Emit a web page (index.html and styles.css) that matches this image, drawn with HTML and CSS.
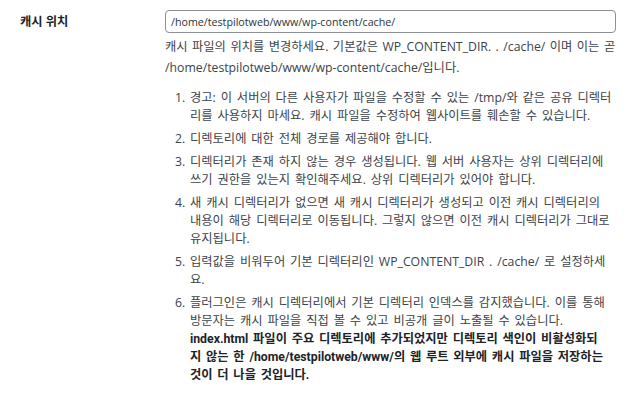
FILE: index.html
```html
<!DOCTYPE html>
<html lang="ko">
<head>
<meta charset="utf-8">
<title>캐시 위치</title>
<link rel="stylesheet" href="styles.css">
</head>
<body>
<div class="row">
  <div class="label">캐시 위치</div>
  <div class="field">
    <input class="path" type="text" value="/home/testpilotweb/www/wp-content/cache/">
    <p class="description">캐시 파일의 위치를 변경하세요. 기본값은 WP_CONTENT_DIR. . /cache/ 이며 이는 곧<br>/home/testpilotweb/www/wp-content/cache/입니다.</p>
    <ol class="notes">
      <li>경고: 이 서버의 다른 사용자가 파일을 수정할 수 있는 /tmp/와 같은 공유 디렉터<br>리를 사용하지 마세요. 캐시 파일을 수정하여 웹사이트를 훼손할 수 있습니다.</li>
      <li>디렉토리에 대한 전체 경로를 제공해야 합니다.</li>
      <li>디렉터리가 존재 하지 않는 경우 생성됩니다. 웹 서버 사용자는 상위 디렉터리에<br>쓰기 권한을 있는지 확인해주세요. 상위 디렉터리가 있어야 합니다.</li>
      <li>새 캐시 디렉터리가 없으면 새 캐시 디렉터리가 생성되고 이전 캐시 디렉터리의<br>내용이 해당 디렉터리로 이동됩니다. 그렇지 않으면 이전 캐시 디렉터리가 그대로<br>유지됩니다.</li>
      <li>입력값을 비워두어 기본 디렉터리인 WP_CONTENT_DIR . /cache/ 로 설정하세<br>요.</li>
      <li>플러그인은 캐시 디렉터리에서 기본 디렉터리 인덱스를 감지했습니다. 이를 통해<br>방문자는 캐시 파일을 직접 볼 수 있고 비공개 글이 노출될 수 있습니다.<br><strong>index.html 파일이 주요 디렉토리에 추가되었지만 디렉토리 색인이 비활성화되<br>지 않는 한 /home/testpilotweb/www/의 웹 루트 외부에 캐시 파일을 저장하는<br>것이 더 나을 것입니다.</strong></li>
    </ol>
  </div>
</div>
</body>
</html>
```
FILE: styles.css
```css
html, body {
  margin: 0;
  padding: 0;
  background: #ffffff;
}
body {
  font-family: "Open Sans", "Noto Sans CJK KR", sans-serif;
  color: #3c434a;
}
.row {
  display: flex;
  padding: 10px 0 0 20px;
}
.label {
  width: 145px;
  flex: none;
  font-size: 12.25px;
  font-weight: bold;
  color: #1d2327;
  line-height: 24px;
}
.field {
  display: flex;
  flex-direction: column;
  white-space: nowrap;
}
.path {
  box-sizing: border-box;
  width: 451px;
  height: 23px;
  margin: 0;
  padding: 0 5px;
  border: 1px solid #8c8f94;
  border-radius: 4px;
  font-family: inherit;
  font-size: 10.7px;
  color: #2c3338;
  background: #fff;
}
.description,
.notes {
  font-size: 12.27px;
}
.description {
  margin: 3px 0 0;
  line-height: 21px;
  word-spacing: 1.3px;
}
.notes {
  margin: 11px 0 0;
  padding-left: 25px;
  line-height: 18.2px;
  word-spacing: 1.7px;
}
.notes li {
  margin-bottom: 4.5px;
}
.notes strong {
  font-family: Roboto, "Noto Sans CJK KR", sans-serif;
  color: #1d2327;
}
```
